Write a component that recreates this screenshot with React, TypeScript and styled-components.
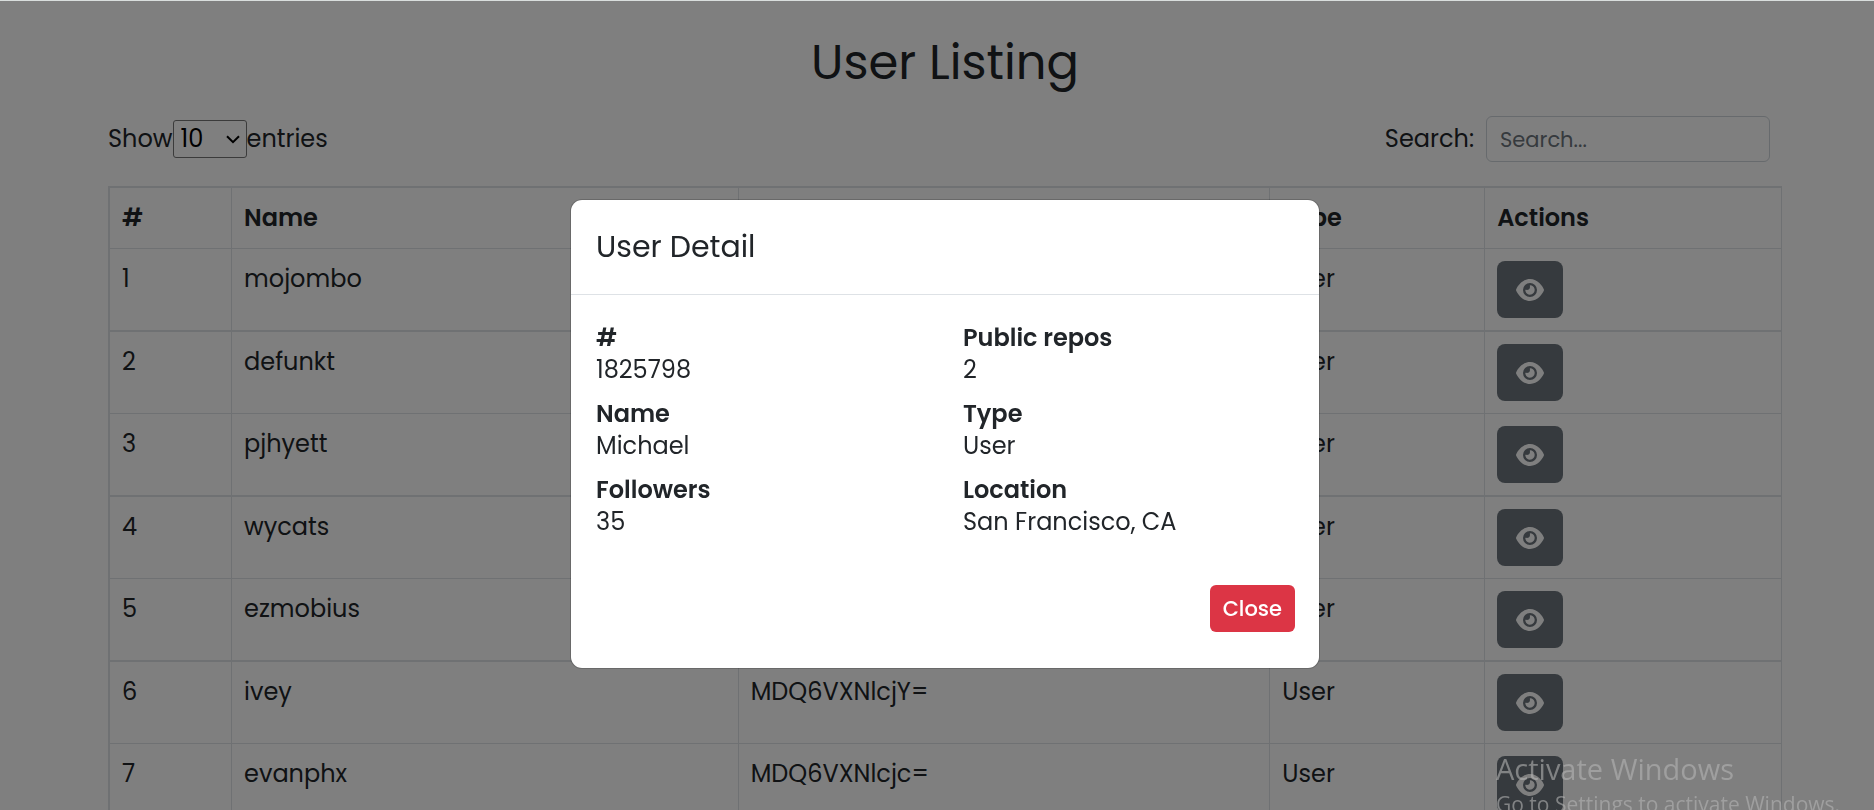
import React from "react";
import styled, { createGlobalStyle } from "styled-components";
import { FaEye } from "react-icons/fa6";

const GlobalStyle = createGlobalStyle`
  *, *::before, *::after { box-sizing: border-box; }
  body {
    margin: 0;
    overflow: hidden;
    background: #ffffff;
    color: #212529;
    font-family: Poppins, Inter, sans-serif;
    font-size: 24px;
    font-weight: 400;
    line-height: 36px;
  }
`;

const Page = styled.main`
  border-top: 1px solid #d9dedd;
  padding: 26px 92px 24px 108px;
`;

const PageTitle = styled.h1`
  margin: 0 0 17px;
  font-size: 48px;
  font-weight: 400;
  line-height: 72px;
  text-align: center;
`;

const Toolbar = styled.div`
  display: flex;
  align-items: center;
  justify-content: space-between;
  margin-bottom: 24px;
  padding-right: 12px;
`;

const ToolLabel = styled.label<{ $gap?: number }>`
  display: flex;
  align-items: center;
  gap: ${({ $gap = 0 }) => $gap}px;
`;

const SelectBox = styled.span`
  position: relative;
  display: flex;
`;

const PageSize = styled.select`
  appearance: none;
  width: 74px;
  height: 38px;
  padding: 0 7px;
  border: 1px solid #767676;
  border-radius: 3px;
  background: transparent;
  color: #000000;
  font: inherit;
`;

const SelectArrow = styled.svg`
  position: absolute;
  right: 7px;
  top: 15px;
  width: 14px;
  height: 9px;
  fill: none;
  stroke: #000000;
  stroke-width: 2;
  pointer-events: none;
`;

const SearchInput = styled.input`
  width: 284px;
  height: 46px;
  padding: 0 13px;
  border: 1px solid #ced4da;
  border-radius: 6px;
  background: transparent;
  color: inherit;
  font: inherit;
  font-size: 21px;

  &::placeholder {
    color: #6c757d;
    opacity: 1;
  }
`;

const UserTable = styled.table`
  width: 100%;
  border: solid #dee2e6;
  border-width: 2px 0 0 2px;
  border-spacing: 0;
  table-layout: fixed;
`;

const Column = styled.col<{ $share: number }>`
  width: ${({ $share }) => $share}%;
`;

const HeadCell = styled.th`
  padding: 12px;
  border: solid #dee2e6;
  border-width: 0 1px 1px 0;
  font-weight: 600;
  text-align: left;
`;

const BodyRow = styled.tr`
  &:nth-child(odd) > td {
    border-bottom-width: 2px;
  }
`;

const Cell = styled.td`
  padding: 12px;
  border: solid #dee2e6;
  border-width: 0 1px 1px 0;
  vertical-align: top;
`;

const ViewButton = styled.button`
  display: flex;
  align-items: center;
  justify-content: center;
  width: 66px;
  height: 57px;
  padding: 0;
  border: 0;
  border-radius: 8px;
  background: #6c757d;
  color: #ffffff;
  cursor: pointer;
`;

const Backdrop = styled.div`
  position: fixed;
  inset: 1px 0 0;
  display: flex;
  align-items: flex-start;
  justify-content: center;
  padding: 198px 0 0 16px;
  background: rgba(0, 0, 0, 0.5);
`;

const Dialog = styled.section`
  width: 750px;
  border: 1px solid rgba(0, 0, 0, 0.175);
  border-radius: 12px;
  background: #ffffff;
  background-clip: padding-box;
`;

const DialogHeader = styled.header`
  padding: 24px 25px;
  border-bottom: 1px solid #dee2e6;
`;

const DialogTitle = styled.h2`
  margin: 0;
  font-size: 30px;
  font-weight: 400;
  line-height: 46px;
`;

const DetailGrid = styled.dl`
  display: grid;
  grid-template-columns: 1fr 1fr;
  column-gap: 36px;
  row-gap: 12px;
  margin: 0;
  padding: 27px 25px 26px;
`;

const Detail = styled.div`
  line-height: 32px;
`;

const DetailName = styled.dt`
  font-weight: 600;
`;

const DetailValue = styled.dd`
  margin: 0;
`;

const DialogFooter = styled.footer`
  display: flex;
  justify-content: flex-end;
  padding: 21px 24px 36px;
`;

const CloseButton = styled.button`
  height: 47px;
  padding: 0 13px;
  border: 0;
  border-radius: 6px;
  background: #dc3545;
  color: #ffffff;
  font: inherit;
  font-size: 21px;
  font-weight: 500;
  cursor: pointer;
`;

const Watermark = styled.aside`
  position: fixed;
  left: calc(100% - 378px);
  top: 749px;
  color: #b4b4b4;
  font-family: "Segoe UI", "Open Sans", sans-serif;
  font-size: 21px;
  font-weight: 400;
  line-height: 30px;
  opacity: 0.6;
  pointer-events: none;
  white-space: nowrap;
`;

const WatermarkTitle = styled.div`
  font-size: 29px;
  line-height: 40px;
`;

const users = [
  { id: 1, name: "mojombo", node: "MDQ6VXNlcjE=" },
  { id: 2, name: "defunkt", node: "MDQ6VXNlcjI=" },
  { id: 3, name: "pjhyett", node: "MDQ6VXNlcjM=" },
  { id: 4, name: "wycats", node: "MDQ6VXNlcjQ=" },
  { id: 5, name: "ezmobius", node: "MDQ6VXNlcjU=" },
  { id: 6, name: "ivey", node: "MDQ6VXNlcjY=" },
  { id: 7, name: "evanphx", node: "MDQ6VXNlcjc=" },
];

const details = [
  ["#", "1825798"],
  ["Public repos", "2"],
  ["Name", "Michael"],
  ["Type", "User"],
  ["Followers", "35"],
  ["Location", "San Francisco, CA"],
];

export default function App() {
  return (
    <>
      <GlobalStyle />
      <Page>
        <PageTitle>User Listing</PageTitle>
        <Toolbar>
          <ToolLabel>
            Show
            <SelectBox>
              <PageSize defaultValue="10">
                <option>10</option>
                <option>25</option>
                <option>50</option>
              </PageSize>
              <SelectArrow viewBox="0 0 14 9" aria-hidden="true">
                <path d="M1 1.2 7 7.2l6-6" />
              </SelectArrow>
            </SelectBox>
            entries
          </ToolLabel>
          <ToolLabel $gap={12}>
            Search:
            <SearchInput type="search" placeholder="Search..." />
          </ToolLabel>
        </Toolbar>
        <UserTable>
          <colgroup>
            <Column $share={7.3} />
            <Column $share={30.3} />
            <Column $share={31.8} />
            <Column $share={12.85} />
            <Column $share={17.75} />
          </colgroup>
          <thead>
            <tr>
              <HeadCell>#</HeadCell>
              <HeadCell>Name</HeadCell>
              <HeadCell>Node Id</HeadCell>
              <HeadCell>Type</HeadCell>
              <HeadCell>Actions</HeadCell>
            </tr>
          </thead>
          <tbody>
            {users.map((user) => (
              <BodyRow key={user.id}>
                <Cell>{user.id}</Cell>
                <Cell>{user.name}</Cell>
                <Cell>{user.node}</Cell>
                <Cell>User</Cell>
                <Cell>
                  <ViewButton type="button" aria-label={`View ${user.name}`}>
                    <FaEye size={28} />
                  </ViewButton>
                </Cell>
              </BodyRow>
            ))}
          </tbody>
        </UserTable>
      </Page>
      <Backdrop>
        <Dialog role="dialog" aria-modal="true" aria-labelledby="detail-title">
          <DialogHeader>
            <DialogTitle id="detail-title">User Detail</DialogTitle>
          </DialogHeader>
          <DetailGrid>
            {details.map(([name, value]) => (
              <Detail key={name}>
                <DetailName>{name}</DetailName>
                <DetailValue>{value}</DetailValue>
              </Detail>
            ))}
          </DetailGrid>
          <DialogFooter>
            <CloseButton type="button">Close</CloseButton>
          </DialogFooter>
        </Dialog>
      </Backdrop>
      <Watermark>
        <WatermarkTitle>Activate Windows</WatermarkTitle>
        Go to Settings to activate Windows.
      </Watermark>
    </>
  );
}
